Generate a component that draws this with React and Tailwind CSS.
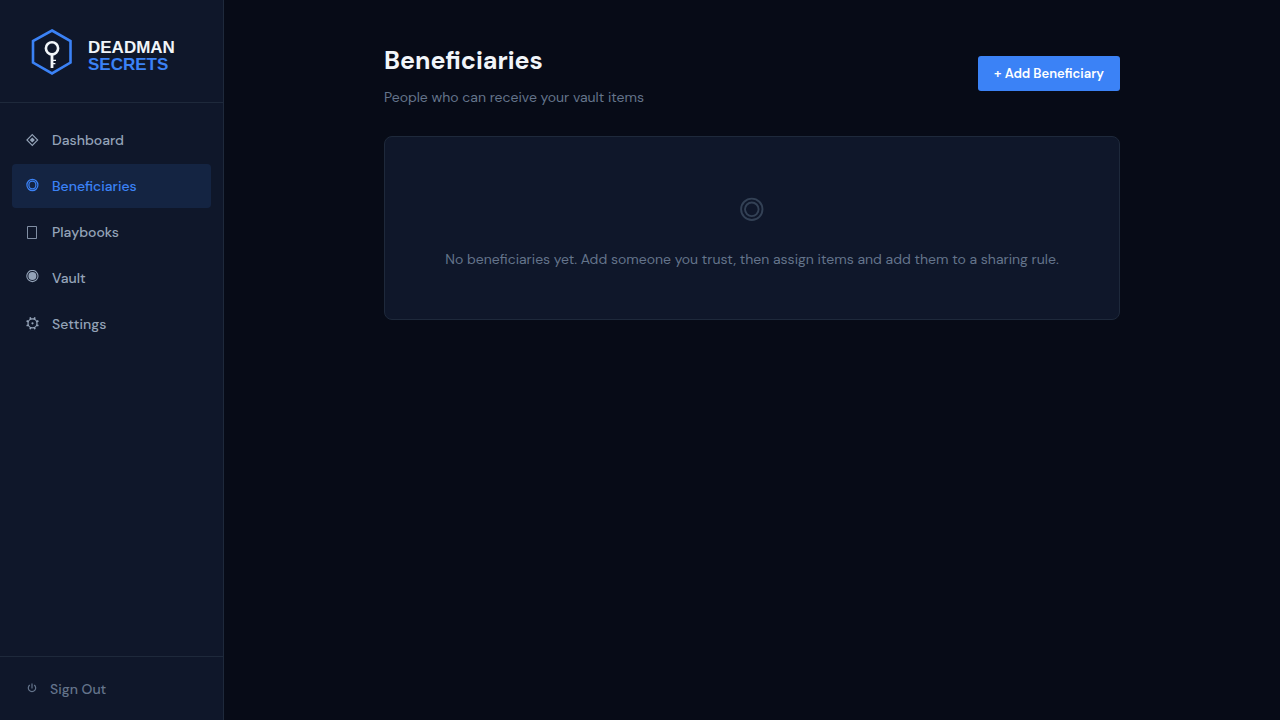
import { useState } from 'react'

const NAV_ITEMS = [
  { id: 'dashboard', label: 'Dashboard', Icon: DiamondIcon },
  { id: 'beneficiaries', label: 'Beneficiaries', Icon: RingsIcon },
  { id: 'playbooks', label: 'Playbooks', Icon: PageIcon },
  { id: 'vault', label: 'Vault', Icon: DialIcon },
  { id: 'settings', label: 'Settings', Icon: GearIcon },
]

const GEAR_TEETH = [22.5, 67.5, 112.5, 157.5, 202.5, 247.5, 292.5, 337.5]

function DiamondIcon() {
  return (
    <svg className="w-4 h-4" viewBox="0 0 16 16" fill="none">
      <path d="M8.3 2.6 L13.7 8 L8.3 13.4 L2.9 8 Z" stroke="currentColor" strokeWidth="1.1" />
      <path d="M8.3 5.4 L10.9 8 L8.3 10.6 L5.7 8 Z" fill="currentColor" />
    </svg>
  )
}

function RingsIcon() {
  return (
    <svg className="w-4 h-4" viewBox="0 0 16 16" fill="none" stroke="currentColor" strokeWidth="1.2">
      <ellipse cx="8.4" cy="7" rx="5.5" ry="5.7" />
      <ellipse cx="8.4" cy="7" rx="3.5" ry="3.9" />
    </svg>
  )
}

function PageIcon() {
  return (
    <svg className="w-4 h-4" viewBox="0 0 16 16" fill="none" stroke="currentColor" strokeWidth="1">
      <path d="M3.5 2.5 H12.5 V14.5 H3.5 Z" strokeOpacity="0.85" />
    </svg>
  )
}

function DialIcon() {
  return (
    <svg className="w-4 h-4" viewBox="0 0 16 16" fill="none">
      <circle cx="8.4" cy="6" r="5.6" stroke="currentColor" strokeWidth="1.1" />
      <circle cx="8.4" cy="6" r="4" fill="currentColor" />
    </svg>
  )
}

function GearIcon() {
  return (
    <svg className="w-4 h-4" viewBox="0 0 16 16" fill="none">
      <circle cx="8.5" cy="7.3" r="4.5" stroke="currentColor" strokeWidth="1.2" />
      <circle cx="8.5" cy="7.3" r="1.1" fill="currentColor" />
      {GEAR_TEETH.map(angle => (
        <path
          key={angle}
          d="M8.5 2.9 V0.9"
          stroke="currentColor"
          strokeWidth="1.7"
          transform={`rotate(${angle} 8.5 7.3)`}
        />
      ))}
    </svg>
  )
}

function PowerIcon() {
  return (
    <svg className="w-4 h-4" viewBox="0 0 16 16" fill="none" stroke="currentColor" strokeWidth="1.2">
      <path d="M8 2.6 V7.4" />
      <path d="M5.8 4 A3.7 3.7 0 1 0 10.2 4" />
    </svg>
  )
}

function Logo() {
  return (
    <a href="#dashboard" className="flex items-center gap-3">
      <svg className="w-12 h-12 flex-shrink-0" viewBox="0 0 48 48" fill="none">
        <path d="M24 2.5 L42.5 13 V34.6 L24 45.4 L5 34.6 V13 Z" stroke="#3b82f6" strokeWidth="2.6" />
        <circle cx="24" cy="20.3" r="6.1" stroke="#f1f5f9" strokeWidth="2.6" />
        <path d="M24 26.5 V40" stroke="#f1f5f9" strokeWidth="2.8" />
        <path d="M25 32.4 H28 M25 35.6 H27.4" stroke="#f1f5f9" strokeWidth="1.4" />
      </svg>
      <div className="pt-2 font-['Liberation_Sans',Arial,sans-serif] text-[17px] leading-[17px] font-bold">
        <div className="text-[#f1f5f9]">DEADMAN</div>
        <div className="text-[#3b82f6]">SECRETS</div>
      </div>
    </a>
  )
}

function Sidebar({ active, onSelect }) {
  return (
    <aside className="w-56 flex-shrink-0 flex flex-col bg-[#0f172a] border-r border-[#1e293b]">
      <div className="px-7 pt-7 pb-[26px] border-b border-[#1e293b]">
        <Logo />
      </div>

      <nav className="flex-1 flex flex-col gap-0.5 px-3 pt-[15px]">
        {NAV_ITEMS.map(({ id, label, Icon }) => (
          <button
            key={id}
            onClick={() => onSelect(id)}
            className={`h-11 flex items-center gap-3 px-3 rounded text-[14px] leading-5 font-medium text-left transition-colors
              ${active === id ? 'bg-[#3b82f6]/12 text-[#3b82f6]' : 'text-[#94a3b8] hover:text-[#e2e8f0]'}`}
          >
            <Icon />
            {label}
          </button>
        ))}
      </nav>

      <div className="border-t border-[#1e293b] px-3 py-[10px]">
        <button className="w-full h-[43px] flex items-center gap-2.5 px-3 text-[14px] leading-5 font-medium text-[#64748b] hover:text-[#94a3b8] transition-colors">
          <PowerIcon />
          Sign Out
        </button>
      </div>
    </aside>
  )
}

export default function App() {
  const [active, setActive] = useState('beneficiaries')

  return (
    <div className="min-h-screen flex bg-[#070b17] font-['DM_Sans',Inter,sans-serif]">
      <Sidebar active={active} onSelect={setActive} />

      <main className="flex-1 px-8 py-10">
        <div className="max-w-[736px] mx-auto">
          {/* Header */}
          <div className="mb-[29px] flex items-center justify-between">
            <div>
              <h1 className="text-[25px] leading-[42px] font-bold text-[#f1f5f9]">Beneficiaries</h1>
              <p className="mt-[5px] text-[14px] leading-5 text-[#64748b]">People who can receive your vault items</p>
            </div>
            <button className="h-[35px] px-4 rounded-[3px] bg-[#3b82f6] hover:bg-[#60a5fa] text-[13px] font-semibold text-white transition-colors">
              + Add Beneficiary
            </button>
          </div>

          {/* Empty state */}
          <div className="rounded-lg border border-[#1e293b] bg-[#0f172a] px-6 py-12 flex flex-col items-center text-center">
            <svg className="mt-3 mb-[26px] w-6 h-6 text-[#334155]" viewBox="0 0 24 24" fill="none" stroke="currentColor" strokeWidth="1.9">
              <circle cx="11.8" cy="12.3" r="10.7" />
              <circle cx="11.8" cy="12.3" r="6.8" />
            </svg>
            <p className="text-[14px] leading-6 text-[#64748b]">
              No beneficiaries yet. Add someone you trust, then assign items and add them to a sharing rule.
            </p>
          </div>
        </div>
      </main>
    </div>
  )
}
